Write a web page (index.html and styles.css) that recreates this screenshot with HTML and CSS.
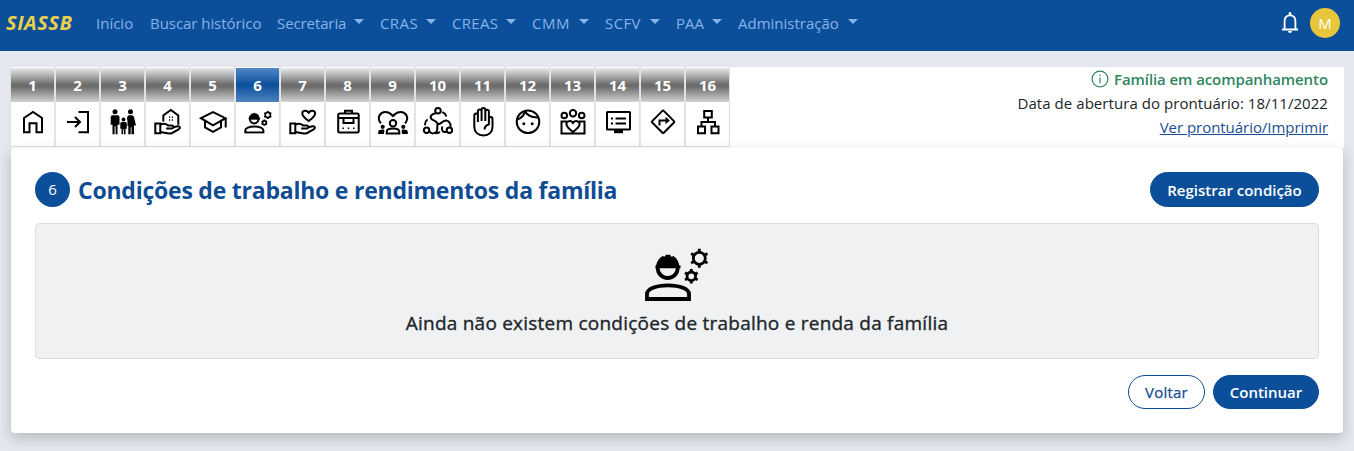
FILE: index.html
```html
<!DOCTYPE html>
<html lang="pt-BR">
<head>
<meta charset="utf-8">
<title>SIASSB</title>
<link rel="stylesheet" href="styles.css">
</head>
<body>
<svg class="defs" aria-hidden="true">
  <symbol id="worker" viewBox="0 0 66 54">
    <circle class="head" cx="23.7" cy="20" r="10" fill="none" stroke="#000"/>
    <path fill="#000" d="M12 17.500h1C13 12.500 16 9 19.500 7.700v4h2V6.800h5v4.900h2v-4c3.500 1.300 6 4.800 6 9.800h2v2.700H11.500v-2.700z"/>
    <path class="head" fill="none" stroke="#000" d="M3 51v-5c0-5 9-8.700 21-8.700S45 41 45 46v5z"/>
    <circle class="gear" cx="55.300" cy="10.300" r="6" fill="none" stroke="#000"/>
    <path class="gear" stroke="#000" d="M55.300 4.500V.8M55.300 16v3.800M60.300 7.400l3.200-1.900M50.300 7.400l-3.200-1.900M60.300 13.200l3.200 1.900M50.300 13.200l-3.200 1.900"/>
    <circle class="gear" cx="47.300" cy="28.300" r="4.300" fill="none" stroke="#000"/>
    <path class="gear" stroke="#000" d="M47.300 24v-3M47.300 32.600v3M51 26.200l2.600-1.500M43.600 26.200 41 24.700M51 30.400l2.600 1.500M43.600 30.400 41 31.900"/>
  </symbol>
  <symbol id="hand" viewBox="0 0 34 34">
    <path d="M4.300 18.500h5v9.700h-5zM9.500 19.800c3-1.800 5.200-1.200 7.500.6h3.600c2.400 0 2.400 3 0 3h-5.400M21.500 22.500l5-1.200c2.500-.3 3.300 1.800 1.200 3l-7 3.900c-3.500 1-7.500-.8-11.200-1.200"/>
  </symbol>
</svg>

<header class="navbar">
  <a class="brand">SIASSB</a>
  <nav class="menu">
    <a class="inicio">Início</a>
    <a class="busca">Buscar histórico</a>
    <a class="drop secretaria">Secretaria</a>
    <a class="drop cras">CRAS</a>
    <a class="drop creas">CREAS</a>
    <a class="drop cmm">CMM</a>
    <a class="drop scfv">SCFV</a>
    <a class="drop paa">PAA</a>
    <a class="drop admin">Administração</a>
  </nav>
  <svg class="bell" viewBox="0 0 18 22"><path fill="none" stroke="#fff" stroke-width="1.800" d="M1 17.500h16M3.600 17.500V9c0-3.500 2.200-5.700 5.400-5.700s5.400 2.200 5.400 5.700v8.500"/><path fill="#fff" d="M7.600 3V1.500a1.400 1.400 0 0 1 2.800 0V3zM7 19h4a2 2 0 0 1-4 0z"/></svg>
  <span class="avatar">M</span>
</header>

<main class="page">
  <section class="top">
    <div class="tabs">
      <a class="tab"><b>1</b><svg viewBox="0 0 34 34"><path d="M8 27.200V13L17 7l9 6v14.200h-5.500v-9h-7v9z"/></svg></a>
      <a class="tab"><b>2</b><svg viewBox="0 0 34 34"><path d="M17.500 7H27v20.200h-9.500M6 17h12M14 12l5 5-5 5"/></svg></a>
      <a class="tab"><b>3</b><svg class="solid" viewBox="0 0 34 34"><circle cx="9" cy="6.800" r="2.500"/><path d="M6.500 10.300h5.200q1.800 0 1.800 2v7.500h-2v9.500H9.600v-8h-1v8H6.500v-9.500H4.700v-7.500q0-2 1.800-2z"/><circle cx="17.500" cy="14.500" r="1.900"/><path d="M15.700 17h3.700q1.400 0 1.400 1.500v5.200h-1.300v5.600h-1.600v-5h-.8v5h-1.600v-5.600h-1.200v-5.200q0-1.500 1.400-1.500z"/><circle cx="24.500" cy="6.800" r="2.500"/><path d="M23 10.300h3q1.400 0 1.900 1.500l2.100 8.700h-2v8.800h-2.500v-7h-.8v7h-2.400v-8.300h-.8v-4.700l-.5-2.300.3-2.200q.5-1.500 1.700-1.500z"/></svg></a>
      <a class="tab"><b>4</b><svg viewBox="0 0 34 34"><use href="#hand"/><path d="M12.300 16.500v-6L19.800 5l7.500 5.500v9.300"/><path stroke-width="1.400" d="M18 12.200h1.200M20.800 12.200H22M18 15h1.200M20.800 15H22"/></svg></a>
      <a class="tab"><b>5</b><svg viewBox="0 0 34 34"><path d="M5 13.200 17 7l12.500 6.200L17 20.300zM9 16v6.300l8 4.600 8-4.600V16M29.700 13v9.500"/></svg></a>
      <a class="tab active"><b>6</b><svg viewBox="0 0 34 34"><use href="#worker" x="3" y="5.500" width="28.400" height="23.200"/></svg></a>
      <a class="tab"><b>7</b><svg viewBox="0 0 34 34"><use href="#hand"/><path d="M22.700 16c-3.800-3-6.400-4.800-6.400-7.300 0-3.400 4.400-4 6.400-1 2-3 6.400-2.400 6.400 1 0 2.500-2.600 4.300-6.400 7.300z"/></svg></a>
      <a class="tab"><b>8</b><svg viewBox="0 0 34 34"><rect x="7.200" y="8.500" width="20.500" height="19" rx="1.500"/><path d="M14 8.500V5.700h7v2.800M7 13h21M12.500 13v5h10v-5"/><path stroke-width="1.500" d="M11.500 23.300H13M16.700 23.300h1.500M22 23.300h1.500"/></svg></a>
      <a class="tab"><b>9</b><svg viewBox="0 0 34 34"><path d="M5 18.500C-.2 12 5 6.500 10 7c3.500.2 5.200 2 7 4 1.800-2 3.500-3.800 7-4 5-.5 10.200 5 5 11.500"/><circle cx="17" cy="18.300" r="3.200"/><path d="M10.700 28.400v-1.600c0-2.400 3-3.300 6.300-3.300s6.300.9 6.300 3.300v1.600z"/><path class="fill" d="M2.200 29v-2c0-2 3-2.800 6.200-2.200L8 29zM31.800 29v-2c0-2-3-2.800-6.200-2.200L26 29z"/><circle class="fill" cx="6.700" cy="21.800" r="2.100"/><circle class="fill" cx="27.300" cy="21.800" r="2.100"/></svg></a>
      <a class="tab"><b>10</b><svg viewBox="0 0 34 34"><g stroke-linecap="round"><circle cx="17" cy="5.800" r="2.800"/><circle cx="5.600" cy="25.200" r="2.700"/><circle cx="28.400" cy="25.200" r="2.700"/><path d="M14 8.500c-3.500.3-5.500 3.500-3.500 5.500 1.800 1.700 4.500 1.500 6 4.500M22 7.500c1.600.7 2.700 1.800 3 3.300M4 19.500c0-2 .6-3.500 2-4.500M8.500 26.500c2 3 6.500 2.200 7.500-.7.800-2.600-.2-4.800.7-7.300M29.500 22c.8-4-2.500-7.500-6.300-6-2.700 1-3.200 2.800-6 3.200M25.500 26.800c-3.500.8-5.500-1.300-4.300-4.600M15 28.300c1.500 0 2.500-.4 3.300-1"/></g></svg></a>
      <a class="tab"><b>11</b><svg viewBox="0 0 34 34"><path d="M8.300 22V10.500c0-2.600 3.600-2.600 3.600 0V17M11.900 16V6.500c0-2.600 3.700-2.600 3.700 0V16M15.600 15V5c0-2.600 3.700-2.600 3.700 0v11M19.300 15V6.800c0-2.600 3.600-2.600 3.600 0V20M22.900 16v-2c0-2.600 3.600-2.600 3.600 0v8c0 5-3.500 8.500-9 8.500S8.300 27 8.300 22M22.900 19.500c-2.600.6-4.300 2.200-4.300 5"/></svg></a>
      <a class="tab"><b>12</b><svg viewBox="0 0 34 34"><circle cx="17" cy="16.800" r="11.300"/><path d="M6.300 14.500C11 12.800 13.500 10 14 6.200M13.800 6.400c3 4.400 7.500 6.400 13.500 6"/><circle class="fill" cx="12.800" cy="18.700" r="1.500"/><circle class="fill" cx="21.200" cy="18.700" r="1.500"/></svg></a>
      <a class="tab"><b>13</b><svg viewBox="0 0 34 34"><circle cx="17" cy="8.300" r="3.200"/><circle cx="8.300" cy="10.500" r="2.800"/><circle cx="25.700" cy="10.500" r="2.800"/><path d="M11 16.500H5.500v12h23v-12H23M17 27c-4.500-3.600-6.600-5.300-6.600-8 0-3.300 4.600-4 6.600-1 2-3 6.600-2.300 6.600 1 0 2.700-2.100 4.400-6.600 8z"/></svg></a>
      <a class="tab"><b>14</b><svg viewBox="0 0 34 34"><rect x="6" y="7" width="23" height="17.500" rx=".5"/><path d="M14.500 13.500H25M14.500 18.500H25M10 13.500h2M10 18.500h2"/><path class="fill" d="M13 25h9v3.200h-9z"/></svg></a>
      <a class="tab"><b>15</b><svg viewBox="0 0 34 34"><rect x="8.900" y="8.600" width="16.400" height="16.400" rx="1" transform="rotate(45 17.100 16.800)"/><path d="M13.500 20.500v-5H21"/><path class="fill" d="m19.500 11.800 4.400 3.700-4.400 3.700z"/></svg></a>
      <a class="tab"><b>16</b><svg viewBox="0 0 34 34"><path d="M13.200 6h7.600v6.500h-7.600zM7 21.500h7v6.700H7zM20.500 21.500h7v6.700h-7zM17 12.500V17M10.500 21.500V17h13.500v4.500"/></svg></a>
    </div>
    <div class="status">
      <div class="follow"><svg viewBox="0 0 18 18"><circle cx="9" cy="9" r="7.900" fill="none" stroke="#2f8560" stroke-width="1.200"/><path fill="#2f8560" d="M8.400 7.500h1.200v5.700H8.400zM8.300 4.700h1.400V6H8.300z"/></svg><span>Família em acompanhamento</span></div>
      <div class="opened">Data de abertura do prontuário: 18/11/2022</div>
      <a class="print">Ver prontuário/Imprimir</a>
    </div>
  </section>

  <section class="card">
    <div class="heading">
      <span class="step">6</span>
      <h1>Condições de trabalho e rendimentos da família</h1>
      <button class="btn register">Registrar condição</button>
    </div>
    <div class="empty">
      <svg viewBox="0 0 66 54"><use href="#worker"/></svg>
      <p>Ainda não existem condições de trabalho e renda da família</p>
    </div>
    <div class="actions">
      <button class="btn outline">Voltar</button>
      <button class="btn next">Continuar</button>
    </div>
  </section>
</main>
</body>
</html>
```
FILE: styles.css
```css
* { box-sizing: border-box; }
body {
  margin: 0;
  height: 451px;
  overflow: hidden;
  background: #e4e8ee;
  color: #212529;
  font: 15px/24px "Open Sans", "Noto Sans", sans-serif;
}
.defs { position: absolute; width: 0; height: 0; }
.head { stroke-width: var(--line, 3.800px); }
.gear { stroke-width: var(--gear-line, 2.800px); }

.navbar {
  display: flex;
  align-items: center;
  height: 51px;
  padding: 0 14px 5px 6px;
  background: #0b4f9b;
}
.brand {
  width: 90px;
  color: #e9cf4e;
  font-size: 20px;
  font-weight: 700;
  font-style: italic;
  letter-spacing: .55px;
}
.menu { display: flex; flex: 1; color: #86b3e8; white-space: nowrap; }
.menu a { flex: none; }
.drop { display: flex; align-items: center; margin-right: 16px; }
.drop::after {
  content: "";
  margin: -3px 0 0 auto;
  border: 5px solid transparent;
  border-top-color: currentColor;
  border-bottom: 0;
}
.inicio { width: 54px; }
.busca { width: 127px; letter-spacing: -.05px; }
.secretaria { width: 87px; letter-spacing: -.1px; }
.cras { width: 56px; letter-spacing: .4px; }
.creas { width: 64px; letter-spacing: .3px; }
.cmm { width: 57px; letter-spacing: .5px; }
.scfv { width: 55px; letter-spacing: .4px; }
.paa { width: 46px; }
.admin { width: 120px; }
.bell { width: 18px; height: 22px; margin-right: 11px; }
.avatar {
  width: 30px;
  height: 30px;
  border-radius: 50%;
  background: #e8c63c;
  color: #fff;
  line-height: 31px;
  text-align: center;
}

.page { padding: 16px 10px 0; }
.top { display: flex; justify-content: space-between; height: 81px; background: #fff; }
.tabs { display: flex; height: 80px; }
.tab {
  width: 45px;
  border: solid #dfdfdf;
  border-width: 0 1px 1px 0;
  background: #fff;
}
.tab + .tab { border-left: 1px solid #e6e6e6; }
.tab:first-child { border-left: 1px solid #dfdfdf; }
.tab b {
  display: block;
  height: 34px;
  margin-top: 1px;
  background: linear-gradient(#e6e8ea 0, #707070 47%, #6c6a6a 54%, #d2d2d2 100%);
  color: #fff;
  line-height: 34px;
  text-align: center;
}
.tab.active b { background: linear-gradient(#5188c6, #0b4f9b 50%, #4d83c0); }
.tab svg {
  --line: 4.700px;
  --gear-line: 3.800px;
  display: block;
  width: 34px;
  height: 34px;
  margin: 3px auto 0;
  fill: none;
  stroke: #000;
  stroke-width: 2;
}
.tab .solid, .tab .fill { fill: #000; stroke: none; }
.status { padding: 0 16px 0 0; text-align: right; white-space: nowrap; }
.follow { display: flex; align-items: center; justify-content: flex-end; gap: 5px; color: #2f8560; font-weight: 600; letter-spacing: -.08px; }
.follow svg { width: 18px; height: 18px; }
.opened { letter-spacing: .055px; }
.print { color: #1a4f95; text-decoration: underline; letter-spacing: -.04px; }

.card {
  position: relative;
  height: 285px;
  margin-left: 1px;
  margin-right: 1px;
  padding: 24px 24px 0;
  border-radius: 4px;
  background: #fff;
  box-shadow: 0 5px 14px rgba(0, 0, 0, .2);
}
.heading { display: flex; align-items: center; height: 35px; }
.step {
  width: 35px;
  height: 35px;
  border-radius: 50%;
  background: #0b4f9b;
  color: #fff;
  line-height: 35px;
  text-align: center;
}
h1 { margin: 0 auto 0 8px; color: #0f4c94; font-size: 23px; font-weight: 700; letter-spacing: -.23px; white-space: nowrap; }
.btn {
  height: 34px;
  padding: 0;
  border: 1px solid #0b4f9b;
  border-radius: 18px;
  background: #0b4f9b;
  color: #fff;
  font: 600 15px "Open Sans", "Noto Sans", sans-serif;
  white-space: nowrap;
}
.register { width: 169px; height: 35px; }
.empty {
  height: 136px;
  margin-top: 16px;
  padding-top: 24px;
  border: 1px solid #dcdfe2;
  border-radius: 4px;
  background: #eff1f3;
  text-align: center;
}
.empty svg { display: block; width: 66px; height: 54px; margin: 0 auto; }
.empty p {
  margin: 9px 0 0;
  font-size: 19px;
  letter-spacing: .23px;
  -webkit-text-stroke: .35px currentColor;
  white-space: nowrap;
}
.actions { display: flex; justify-content: flex-end; gap: 8px; margin-top: 16px; }
.outline { width: 77px; background: #fff; color: #164c91; font-weight: 400; letter-spacing: .2px; -webkit-text-stroke: .25px currentColor; }
.next { width: 106px; }
```
